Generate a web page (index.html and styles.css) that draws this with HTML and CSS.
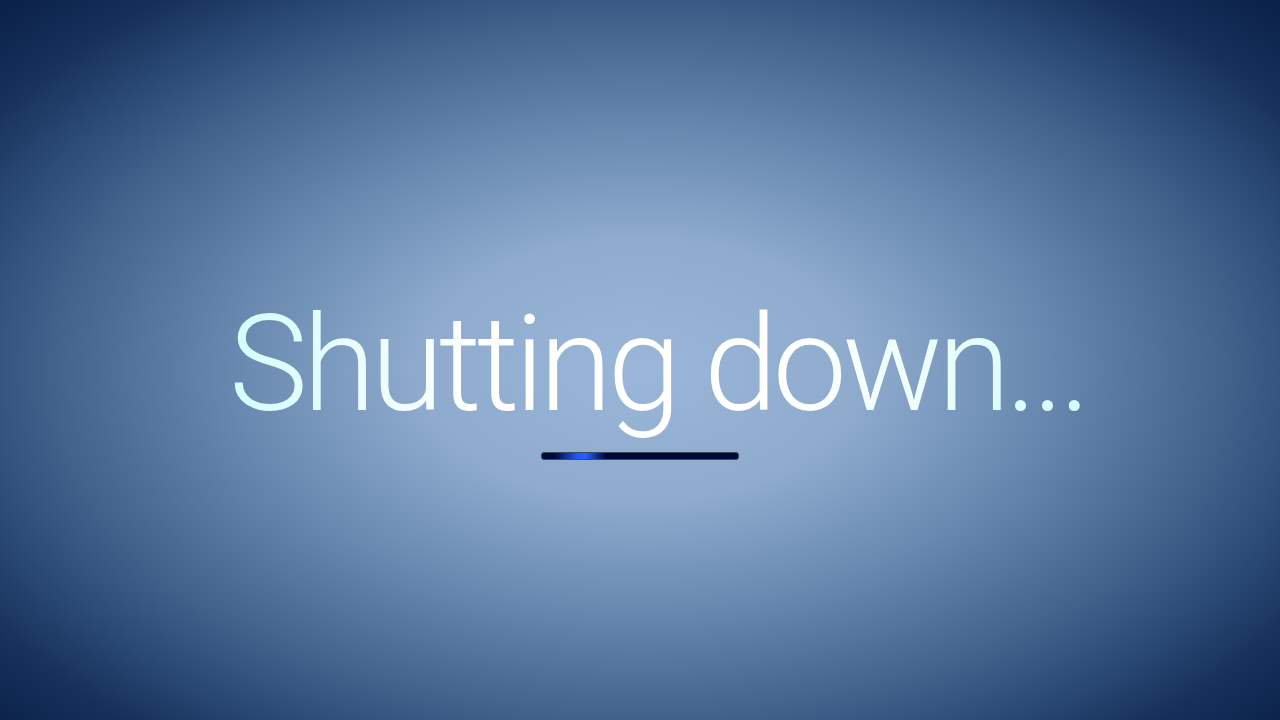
FILE: index.html
```html
<!DOCTYPE html>
<html lang="en">
<head>
<meta charset="utf-8">
<title>Shutting down</title>
<link rel="stylesheet" href="styles.css">
</head>
<body>
<main class="screen">
  <h1 class="message">Shutting down...</h1>
  <div class="progress"><div class="progress-glow"></div></div>
</main>
</body>
</html>
```
FILE: styles.css
```css
html, body {
  margin: 0;
  padding: 0;
  width: 100%;
  height: 100%;
  overflow: hidden;
}
.screen {
  width: 1280px;
  height: 720px;
  display: flex;
  flex-direction: column;
  align-items: center;
  background: radial-gradient(ellipse 740px 440px at 640px 370px,
      #9ab7d9 0%, #8eabce 30%, #6888af 55%, #41618b 80%, #2c4b77 92%, #15305a 106%, #061c42 125%);
  background-color: #061c42;
}
.message {
  margin: 290px 0 0 35px;
  font-family: "Roboto", "Open Sans", sans-serif;
  font-weight: 300;
  font-size: 133px;
  line-height: 150px;
  letter-spacing: -5px;
  font-variant-ligatures: none;
  color: #fff;
  background: linear-gradient(90deg, #d4fdff 0%, #ffffff 30%, #ffffff 65%, #d4fdff 100%);
  -webkit-background-clip: text;
  background-clip: text;
  -webkit-text-fill-color: transparent;
  white-space: nowrap;
}
.progress {
  margin-top: 12px;
  width: 196px;
  height: 6px;
  border: 1px solid #3d4a5a;
  border-radius: 3px;
  background: #000835;
  position: relative;
  overflow: hidden;
}
.progress-glow {
  position: absolute;
  left: 12px;
  top: 0;
  width: 52px;
  height: 100%;
  background: linear-gradient(90deg, rgba(20,60,255,0) 0%, #1f55ff 45%, #2a60ff 60%, rgba(20,60,255,0) 100%);
}
```
